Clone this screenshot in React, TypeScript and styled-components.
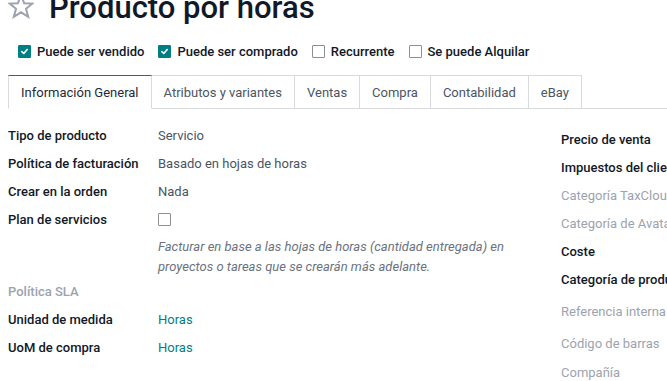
import React from "react";
import styled, { createGlobalStyle } from "styled-components";

const GlobalStyle = createGlobalStyle`
  html, body {
    margin: 0;
    padding: 0;
    background: #ffffff;
    overflow: hidden;
  }
  body {
    font-family: Roboto, "Noto Sans", sans-serif;
    font-size: 13px;
    color: #374151;
  }
`;

const tabs = [
  "Información General",
  "Atributos y variantes",
  "Ventas",
  "Compra",
  "Contabilidad",
  "eBay",
];

const flags = [
  { label: "Puede ser vendido", checked: true },
  { label: "Puede ser comprado", checked: true },
  { label: "Recurrente", checked: false },
  { label: "Se puede Alquilar", checked: false },
];

const rightFields = [
  { label: "Precio de venta", muted: false, height: 28 },
  { label: "Impuestos del cliente", muted: false, height: 28 },
  { label: "Categoría TaxCloud", muted: true, height: 28 },
  { label: "Categoría de Avatax", muted: true, height: 28 },
  { label: "Coste", muted: false, height: 28 },
  { label: "Categoría de producto", muted: false, height: 28 },
  { label: "Referencia interna", muted: true, height: 36 },
  { label: "Código de barras", muted: true, height: 29 },
  { label: "Compañía", muted: true, height: 28 },
];

const Check = ({ checked }: { checked: boolean }) => (
  <CheckBox $checked={checked}>
    {checked && (
      <svg width="9" height="9" viewBox="0 0 10 10">
        <path
          d="M2 5.2 L4.2 7.2 L8 2.8"
          fill="none"
          stroke="#ffffff"
          strokeWidth="1.8"
          strokeLinecap="round"
          strokeLinejoin="round"
        />
      </svg>
    )}
  </CheckBox>
);

const App = () => {
  return (
    <>
      <GlobalStyle />
      <Page>
        <TitleRow>
          <svg width="26" height="25" viewBox="0 0 26 25">
            <polygon
              points="13,1.5 16.2,9.2 24.4,9.6 18,14.8 20.2,22.8 13,18.3 5.8,22.8 8,14.8 1.6,9.6 9.8,9.2"
              fill="none"
              stroke="#9ca3af"
              strokeWidth="2"
              strokeLinejoin="miter"
            />
          </svg>
          <Title>Producto por horas</Title>
        </TitleRow>

        <FlagRow>
          {flags.map((f) => (
            <Flag key={f.label}>
              <Check checked={f.checked} />
              <FlagLabel>{f.label}</FlagLabel>
            </Flag>
          ))}
        </FlagRow>

        <TabBar>
          {tabs.map((t, i) => (
            <Tab key={t} $active={i === 0}>
              {t}
            </Tab>
          ))}
          <TabFill />
        </TabBar>

        <Body>
          <LeftGroup>
            <Label>Tipo de producto</Label>
            <Value>Servicio</Value>
            <Label>Política de facturación</Label>
            <Value>Basado en hojas de horas</Value>
            <Label>Crear en la orden</Label>
            <Value>Nada</Value>
            <Label>Plan de servicios</Label>
            <Value>
              <Check checked={false} />
            </Value>
            <span />
            <Help>
              Facturar en base a las hojas de horas (cantidad entregada) en
              proyectos o tareas que se crearán más adelante.
            </Help>
            <Label $muted>Política SLA</Label>
            <span />
            <Label>Unidad de medida</Label>
            <Link>Horas</Link>
            <Label>UoM de compra</Label>
            <Link>Horas</Link>
          </LeftGroup>

          <RightGroup>
            {rightFields.map((f) => (
              <RightLabel key={f.label} $muted={f.muted} $h={f.height}>
                {f.label}
              </RightLabel>
            ))}
          </RightGroup>
        </Body>
      </Page>
    </>
  );
};

const Page = styled.div`
  width: 667px;
  height: 381px;
  overflow: hidden;
`;

const TitleRow = styled.div`
  display: flex;
  align-items: center;
  gap: 15px;
  padding-left: 8px;
  height: 36px;
  margin-top: -12px;
`;

const Title = styled.h1`
  margin: 0;
  padding-top: 3px;
  font-size: 31px;
  font-weight: 500;
  color: #111827;
  line-height: 36px;
  white-space: nowrap;
`;

const FlagRow = styled.div`
  display: flex;
  align-items: center;
  gap: 14px;
  padding-left: 18px;
  margin-top: 12px;
  height: 30px;
`;

const Flag = styled.div`
  display: flex;
  align-items: center;
  gap: 6px;
`;

const CheckBox = styled.span<{ $checked: boolean }>`
  display: inline-flex;
  align-items: center;
  justify-content: center;
  box-sizing: border-box;
  width: 13px;
  height: 13px;
  border-radius: 1px;
  background: ${(p) => (p.$checked ? "#017e84" : "#ffffff")};
  border: 1px solid ${(p) => (p.$checked ? "#017e84" : "#8b8e94")};
`;

const FlagLabel = styled.span`
  font-weight: 500;
  color: #111827;
  white-space: nowrap;
`;

const TabBar = styled.div`
  display: flex;
  margin-top: 9px;
  padding-left: 8px;
  height: 34px;
  box-sizing: border-box;
`;

const Tab = styled.div<{ $active: boolean }>`
  display: flex;
  align-items: center;
  padding: 0 12px;
  white-space: nowrap;
  color: ${(p) => (p.$active ? "#1f2937" : "#4b5563")};
  background: #ffffff;
  border: 1px solid #d8dadd;
  border-left: ${(p) => (p.$active ? "1px solid #d8dadd" : "none")};
  border-top-color: ${(p) => (p.$active ? "#714b67" : "#d8dadd")};
  border-bottom-color: ${(p) => (p.$active ? "#ffffff" : "#d8dadd")};
`;

const TabFill = styled.div`
  flex: 1;
  border-bottom: 1px solid #d8dadd;
`;

const Body = styled.div`
  display: flex;
  align-items: flex-start;
  padding: 12px 0 0 8px;
`;

const LeftGroup = styled.div`
  display: grid;
  grid-template-columns: 150px 356px;
  grid-auto-rows: minmax(28px, auto);
  align-items: center;
  align-content: start;
  width: 553px;
  flex-shrink: 0;
`;

const Label = styled.div<{ $muted?: boolean }>`
  font-weight: 500;
  color: ${(p) => (p.$muted ? "#9ca3af" : "#111827")};
  white-space: nowrap;
`;

const Value = styled.div`
  display: flex;
  align-items: center;
  color: #4b5563;
`;

const Help = styled.div`
  font-style: italic;
  color: #6b7280;
  line-height: 20px;
  padding-top: 4px;
`;

const Link = styled.div`
  color: #017e84;
`;

const RightGroup = styled.div`
  display: flex;
  flex-direction: column;
  padding-top: 4px;
`;

const RightLabel = styled.div<{ $muted: boolean; $h: number }>`
  height: ${(p) => p.$h}px;
  display: flex;
  align-items: center;
  white-space: nowrap;
  font-weight: ${(p) => (p.$muted ? 400 : 500)};
  color: ${(p) => (p.$muted ? "#9ca3af" : "#111827")};
`;

export default App;
